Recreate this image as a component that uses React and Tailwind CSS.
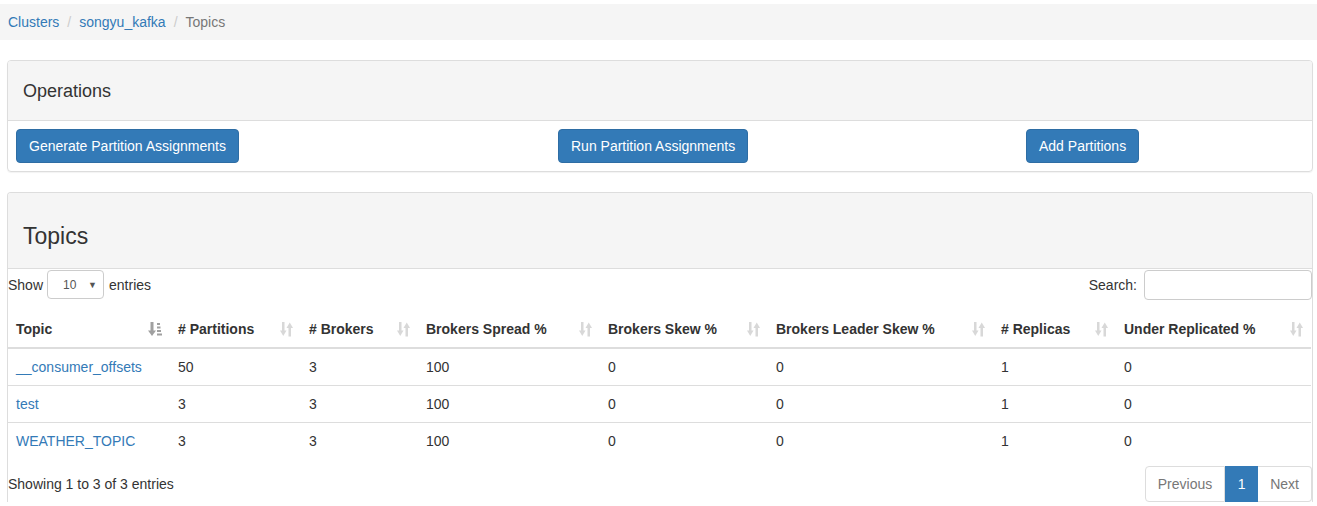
import React from 'react';

const columns = [
  { label: 'Topic', w: 'w-[162px]', active: true },
  { label: '# Partitions', w: 'w-[131px]' },
  { label: '# Brokers', w: 'w-[117px]' },
  { label: 'Brokers Spread %', w: 'w-[182px]' },
  { label: 'Brokers Skew %', w: 'w-[168px]' },
  { label: 'Brokers Leader Skew %', w: 'w-[225px]' },
  { label: '# Replicas', w: 'w-[123px]' },
  { label: 'Under Replicated %', w: 'w-[195px]' },
];

const rows = [
  ['__consumer_offsets', '50', '3', '100', '0', '0', '1', '0'],
  ['test', '3', '3', '100', '0', '0', '1', '0'],
  ['WEATHER_TOPIC', '3', '3', '100', '0', '0', '1', '0'],
];

function SortIcon({ active }) {
  if (active) {
    return (
      <svg width="14" height="15" viewBox="0 0 14 15" className="fill-[#a0a0a0]">
        <rect x="2.5" y="0" width="3" height="9" />
        <polygon points="0,8.5 8,8.5 4,14" />
        <rect x="9" y="1" width="3" height="2" />
        <rect x="9" y="4.5" width="3.5" height="2" />
        <rect x="9" y="8" width="4" height="2" />
        <rect x="9" y="11.5" width="5" height="2" />
      </svg>
    );
  }
  return (
    <svg width="13" height="15" viewBox="0 0 13 15" className="fill-[#d8d8d8]">
      <rect x="2" y="0" width="2.5" height="9" />
      <polygon points="0,8.5 6.5,8.5 3.25,14" />
      <polygon points="6.5,6 13,6 9.75,0.5" />
      <rect x="8.5" y="5.5" width="2.5" height="9" />
    </svg>
  );
}

function Button({ children }) {
  return (
    <button className="h-[34px] px-3 rounded-[4px] bg-[#337ab7] border border-[#2e6da4] text-white text-[14px]">
      {children}
    </button>
  );
}

export default function App() {
  return (
    <div className="min-h-screen bg-white font-['Liberation_Sans',Arial,sans-serif] text-[14px] leading-5 text-[#333] pt-1">
      {/* Breadcrumb */}
      <div className="h-9 bg-[#f5f5f5] flex items-center px-2">
        <a className="text-[#337ab7]">Clusters</a>
        <span className="px-[8px] text-[#ccc]">/</span>
        <a className="text-[#337ab7]">songyu_kafka</a>
        <span className="px-[8px] text-[#ccc]">/</span>
        <span className="text-[#777]">Topics</span>
      </div>

      <div className="pl-[7px] pr-[4px] mt-5">
        {/* Operations */}
        <div className="border border-[#ddd] rounded-[4px] shadow-[0_1px_1px_rgba(0,0,0,0.05)]">
          <div className="h-[60px] bg-[#f5f5f5] border-b border-[#ddd] px-[15px] flex items-center rounded-t-[3px]">
            <h3 className="text-[18px] text-[#333]">Operations</h3>
          </div>
          <div className="grid grid-cols-[542px_468px_1fr] pl-2 pt-2 pb-2">
            <div><Button>Generate Partition Assignments</Button></div>
            <div><Button>Run Partition Assignments</Button></div>
            <div><Button>Add Partitions</Button></div>
          </div>
        </div>

        {/* Topics */}
        <div className="mt-5 border border-[#ddd] rounded-t-[4px] border-b-0">
          <div className="h-[76px] bg-[#f5f5f5] border-b border-[#ddd] px-[15px] pt-[30px] rounded-t-[3px]">
            <h2 className="text-[23px] leading-[26px] text-[#333]">Topics</h2>
          </div>

          <div className="h-[31px] flex items-center justify-between">
            <label className="flex items-center">
              Show
              <span className="ml-[4px] mr-[5px] w-[57px] h-[29px] border border-[#ccc] rounded-[4px] flex items-center justify-between pl-[15px] pr-[6px] text-[12px] text-[#555]">
                <span>10</span>
                <span className="text-[9px] text-[#555]">▼</span>
              </span>
              entries
            </label>
            <label className="flex items-center">
              Search:
              <input className="ml-[7px] w-[168px] h-[30px] border border-[#ccc] rounded-[4px] outline-none" />
            </label>
          </div>

          <table className="mt-[11px] table-fixed border-collapse w-[1303px]">
            <thead>
              <tr className="border-b-2 border-[#ddd]">
                {columns.map((c) => (
                  <th key={c.label} className={`${c.w} relative text-left font-bold p-2 pr-[30px] whitespace-nowrap`}>
                    {c.label}
                    <span className="absolute right-[8px] top-[11px]">
                      <SortIcon active={c.active} />
                    </span>
                  </th>
                ))}
              </tr>
            </thead>
            <tbody>
              {rows.map((r) => (
                <tr key={r[0]} className="border-t border-[#ddd]">
                  {r.map((v, i) => (
                    <td key={i} className={`p-2 h-[37px] ${i === 0 ? 'text-[#337ab7]' : ''}`}>
                      {v}
                    </td>
                  ))}
                </tr>
              ))}
            </tbody>
          </table>

          <div className="mt-[6px] flex items-center justify-between">
            <div>Showing 1 to 3 of 3 entries</div>
            <div className="flex h-[36px]">
              <span className="px-3 flex items-center border border-[#ddd] rounded-l-[4px] text-[#777]">Previous</span>
              <span className="w-[33px] flex items-center justify-center bg-[#337ab7] border border-[#337ab7] text-white">1</span>
              <span className="px-3 flex items-center border border-[#ddd] border-l-0 rounded-r-[4px] text-[#777]">Next</span>
            </div>
          </div>
        </div>
      </div>
    </div>
  );
}
